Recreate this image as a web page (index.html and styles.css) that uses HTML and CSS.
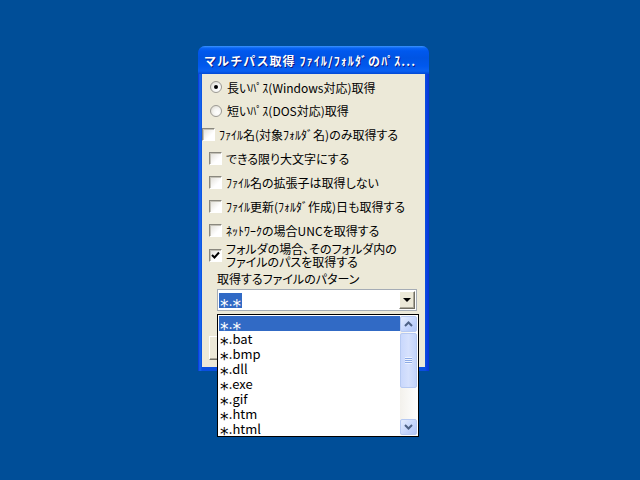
FILE: index.html
```html
<!DOCTYPE html>
<html lang="ja">
<head>
<meta charset="utf-8">
<link rel="stylesheet" href="styles.css">
</head>
<body>
<div class="desktop">
  <div class="window">
    <div class="titlebar"><span class="title">マルチパス取得 ﾌｧｲﾙ/ﾌｫﾙﾀﾞのﾊﾟｽ...</span></div>
    <div class="client">
      <div class="row radio-row first"><span class="radio on"></span><span class="lbl">長いﾊﾟｽ(Windows対応)取得</span></div>
      <div class="row radio-row"><span class="radio"></span><span class="lbl">短いﾊﾟｽ(DOS対応)取得</span></div>
      <div class="row check-row outer"><span class="check"></span><span class="lbl">ﾌｧｲﾙ名(対象ﾌｫﾙﾀﾞ名)のみ取得する</span></div>
      <div class="row check-row"><span class="check"></span><span class="lbl">できる限り大文字にする</span></div>
      <div class="row check-row"><span class="check"></span><span class="lbl">ﾌｧｲﾙ名の拡張子は取得しない</span></div>
      <div class="row check-row"><span class="check"></span><span class="lbl">ﾌｧｲﾙ更新(ﾌｫﾙﾀﾞ作成)日も取得する</span></div>
      <div class="row check-row"><span class="check"></span><span class="lbl">ﾈｯﾄﾜｰｸの場合UNCを取得する</span></div>
      <div class="row check-row two"><span class="check on"><svg width="9" height="9" viewBox="0 0 9 9"><path d="M1 4 L3.5 6.5 L8 1.5" fill="none" stroke="#000" stroke-width="2"/></svg></span><span class="lbl">フォルダの場合、そのフォルダ内の<br>ファイルのパスを取得する</span></div>
      <div class="pattern-label">取得するファイルのパターン</div>
      <div class="combo"><span class="combo-text"><span class="sel"><span class="ast">*</span>.<span class="ast">*</span></span></span><span class="combo-btn"><span class="tri"></span></span></div>
      <div class="hidden-btn"></div>
    </div>
  </div>

  <div class="droplist">
    <div class="items">
      <div class="item selected"><span class="ast">*</span>.<span class="ast">*</span></div>
      <div class="item"><span class="ast">*</span>.bat</div>
      <div class="item"><span class="ast">*</span>.bmp</div>
      <div class="item"><span class="ast">*</span>.dll</div>
      <div class="item"><span class="ast">*</span>.exe</div>
      <div class="item"><span class="ast">*</span>.gif</div>
      <div class="item"><span class="ast">*</span>.htm</div>
      <div class="item"><span class="ast">*</span>.html</div>
    </div>
    <div class="scrollbar">
      <div class="sb-btn"><svg width="9" height="6" viewBox="0 0 9 6"><path d="M1 5 L4.5 1.5 L8 5" fill="none" stroke="#4d6185" stroke-width="2"/></svg></div>
      <div class="sb-thumb"><span class="grip"></span></div>
      <div class="sb-track"></div>
      <div class="sb-btn"><svg width="9" height="6" viewBox="0 0 9 6"><path d="M1 1 L4.5 4.5 L8 1" fill="none" stroke="#4d6185" stroke-width="2"/></svg></div>
    </div>
  </div>
</div>
</body>
</html>
```

FILE: styles.css
```css
html, body {
  margin: 0;
  padding: 0;
}
body {
  width: 640px;
  height: 480px;
  background: #004e98;
  overflow: hidden;
  font-family: "Noto Sans CJK JP", "Noto Sans", sans-serif;
  font-size: 12px;
  color: #000;
}
.desktop {
  position: relative;
  width: 640px;
  height: 480px;
}

/* window (placed on the desktop canvas) */
.window {
  position: absolute;
  left: 198px;
  top: 46px;
  width: 231px;
  height: 325px;
  box-sizing: border-box;
  display: flex;
  flex-direction: column;
  background: linear-gradient(90deg, #0831d9 0, #166aee 2px, #0a4fe0 4px, #0a4fe0 calc(100% - 4px), #0831d9 100%);
  border-radius: 8px 8px 0 0;
}
.titlebar {
  height: 28px;
  flex: none;
  display: flex;
  align-items: center;
  padding-left: 6px;
  border-radius: 7px 7px 0 0;
  background: linear-gradient(180deg, #3d95ff 0, #0a66f5 2px, #0058ee 5px, #0054e3 12px, #0058ee 20px, #0a61f2 25px, #0349d4 28px);
}
.title {
  color: #fff;
  font-weight: bold;
  font-size: 12px;
  letter-spacing: 1.1px;
  white-space: nowrap;
  text-shadow: 1px 1px 0 #0a1883;
}
.client {
  flex: 1;
  margin: 0 4px 4px 4px;
  background: #ece9d8;
  padding-top: 1px;
  display: flex;
  flex-direction: column;
  position: relative;
}
.row {
  display: flex;
  align-items: center;
  gap: 4px;
  height: 24px;
  white-space: nowrap;
}
.lbl {
  font-feature-settings: "palt";
  line-height: 13px;
}
.radio-row {
  padding-left: 8px;
  gap: 5px;
}
.radio-row.first { height: 24px; }
.radio-row + .radio-row { height: 23px; }
.check-row { padding-left: 7px; }
.check-row.outer { padding-left: 0; }
.check-row.two { height: 26px; }

.radio {
  width: 12px;
  height: 12px;
  box-sizing: border-box;
  border-radius: 50%;
  border: 1px solid #9c9a94;
  background: radial-gradient(circle at 65% 65%, #ffffff 0, #f6f6f3 40%, #d6d3c8 100%);
  display: flex;
  align-items: center;
  justify-content: center;
  flex: none;
}
.radio.on::after {
  content: "";
  width: 4px;
  height: 4px;
  border-radius: 50%;
  background: #000;
}
.check {
  width: 13px;
  height: 13px;
  box-sizing: border-box;
  border: 1px solid;
  border-color: #8a887e #ffffff #ffffff #8a887e;
  box-shadow: inset 1px 1px 0 #c4c2b8;
  background: linear-gradient(135deg, #e0ded6 0, #ffffff 65%);
  display: flex;
  align-items: center;
  justify-content: center;
  flex: none;
}
.check svg { display: block; }

.pattern-label {
  padding-left: 15px;
  height: 17px;
  line-height: 14px;
  padding-top: 4px;
  font-feature-settings: "palt";
}
.combo {
  margin-left: 15px;
  width: 200px;
  height: 22px;
  box-sizing: border-box;
  border: 1px solid #a5acb5;
  background: #fff;
  display: flex;
  align-items: center;
  justify-content: space-between;
  padding: 0 1px 0 1px;
}
.combo-text {
  font-size: 13px;
  line-height: 15px;
}
.sel {
  background: #316ac5;
  color: #fff;
  padding: 0 1px 0 1px;
  display: inline-block;
  height: 15px;
  line-height: 15px;
}
.ast {
  font-family: "DejaVu Sans", sans-serif;
  font-size: 17px;
  line-height: 0;
  vertical-align: -6px;
  letter-spacing: 0.3px;
}
.combo-btn {
  width: 16px;
  height: 18px;
  box-sizing: border-box;
  background: #ece9d8;
  border: 1px solid;
  border-color: #ffffff #716f64 #716f64 #ffffff;
  box-shadow: inset -1px -1px 0 #aca899;
  display: flex;
  align-items: center;
  justify-content: center;
}
.tri {
  width: 0;
  height: 0;
  border-left: 4px solid transparent;
  border-right: 4px solid transparent;
  border-top: 4px solid #000;
}
.hidden-btn {
  margin: 25px 0 0 7px;
  width: 80px;
  height: 24px;
  box-sizing: border-box;
  background: #ece9d8;
  border: 1px solid;
  border-color: #ffffff #716f64 #716f64 #ffffff;
  box-shadow: inset -1px -1px 0 #aca899;
}

/* dropdown list popup over the window */
.droplist {
  position: absolute;
  left: 217px;
  top: 314px;
  width: 202px;
  height: 123px;
  box-sizing: border-box;
  border: 1px solid #000;
  background: #fff;
  display: flex;
  padding: 1px;
}
.items {
  flex: 1;
  font-size: 13px;
}
.item {
  height: 15px;
  line-height: 15px;
  padding-left: 1px;
}
.item.selected {
  background: #316ac5;
  color: #fff;
}
.scrollbar {
  width: 17px;
  display: flex;
  flex-direction: column;
  gap: 1px;
  background: linear-gradient(90deg, #f3f1ec, #fefefe);
}
.sb-btn {
  height: 16px;
  box-sizing: border-box;
  border: 1px solid #b6c9f2;
  border-radius: 2px;
  background: linear-gradient(135deg, #e5edfe 0, #c3d4fc 60%, #b2c6f6 100%);
  display: flex;
  align-items: center;
  justify-content: center;
}
.sb-thumb {
  height: 55px;
  box-sizing: border-box;
  border: 1px solid #b6c9f2;
  border-radius: 2px;
  background: linear-gradient(90deg, #c9d8fc 0, #d6e1fd 50%, #c3d4fb 100%);
  display: flex;
  align-items: center;
  justify-content: center;
}
.grip {
  width: 7px;
  height: 7px;
  background: repeating-linear-gradient(180deg, #eef3fe 0, #eef3fe 1px, #8caae6 1px, #8caae6 2px);
}
.sb-track { flex: 1; }
```
